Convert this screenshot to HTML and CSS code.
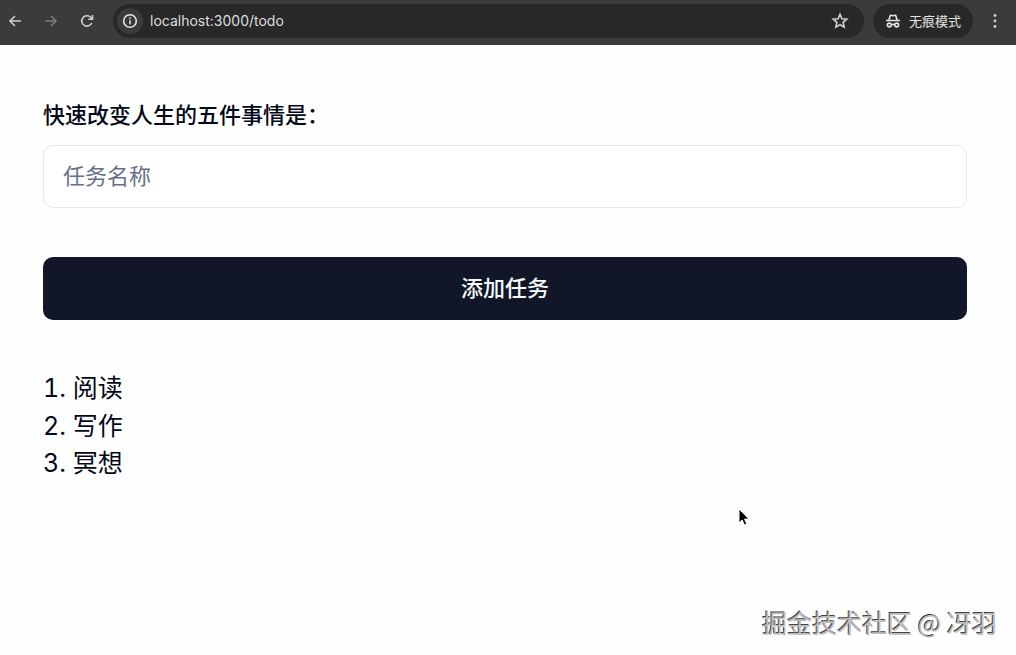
FILE: index.html
```html
<!DOCTYPE html>
<html lang="zh-CN">
<head>
<meta charset="utf-8">
<meta name="viewport" content="width=device-width, initial-scale=1">
<title>Todo</title>
<link rel="stylesheet" href="styles.css">
</head>
<body>
<header class="toolbar">
  <nav class="nav">
    <button class="icon-button" type="button" aria-label="后退">
      <svg width="16" height="16" viewBox="0 0 16 16"><path d="M14 8H3M8 3L3 8l5 5"/></svg>
    </button>
    <button class="icon-button icon-button-dim" type="button" aria-label="前进">
      <svg width="16" height="16" viewBox="0 0 16 16"><path d="M2 8h11M8 3l5 5-5 5"/></svg>
    </button>
    <button class="icon-button" type="button" aria-label="刷新">
      <svg width="16" height="16" viewBox="0 0 16 16"><path d="M12.700 10a5.200 5.200 0 1 1-1-5.700L13.300 6M13.500 2v4.200H9.300"/></svg>
    </button>
  </nav>
  <div class="address">
    <button class="site-info" type="button" aria-label="网站信息">
      <svg width="16" height="16" viewBox="0 0 16 16"><circle cx="8" cy="8" r="6.300"/><path d="M8 7.300v4M8 4.500v1.600"/></svg>
    </button>
    <input class="url" type="text" aria-label="地址" value="localhost:3000/todo">
    <button class="icon-button" type="button" aria-label="收藏">
      <svg width="18" height="18" viewBox="0 0 18 18"><path d="M9 2.300l1.900 4.500 4.900.4-3.700 3.200 1.100 4.800L9 12.700l-4.200 2.500 1.100-4.800-3.700-3.200 4.900-.4z"/></svg>
    </button>
  </div>
  <button class="incognito" type="button">
    <svg width="16" height="16" viewBox="0 0 16 16"><path d="M1 7.500h14M3.900 7l1.300-4.300q.2-.6.800-.4l2 .4 2-.4q.6-.2.800.4L12.100 7M6.300 11.800q1.700-.9 3.400 0"/><circle cx="4.300" cy="12" r="1.900"/><circle cx="11.700" cy="12" r="1.900"/></svg>
    <span>无痕模式</span>
  </button>
  <button class="icon-button menu" type="button" aria-label="菜单">
    <svg width="16" height="16" viewBox="0 0 16 16"><circle class="dot" cx="8" cy="2.500" r="1.400"/><circle class="dot" cx="8" cy="8" r="1.400"/><circle class="dot" cx="8" cy="13.500" r="1.400"/></svg>
  </button>
</header>
<main class="page">
  <form class="todo-form">
    <label class="label" for="task">快速改变人生的五件事情是：</label>
    <input class="field" id="task" type="text" placeholder="任务名称">
    <button class="submit" type="button">添加任务</button>
  </form>
  <ol class="tasks">
    <li>阅读</li>
    <li>写作</li>
    <li>冥想</li>
  </ol>
</main>
<svg class="cursor" width="14" height="20" viewBox="0 0 14 20"><path d="M2 2v14l3.200-3 2.200 5 2.400-1-2.200-4.900H12z"/></svg>
<div class="watermark">掘金技术社区 @ 冴羽</div>
</body>
</html>
```
FILE: styles.css
```css
* {
  box-sizing: border-box;
}

body {
  margin: 0;
  min-height: 100vh;
  background: #fefefe;
  color: #020817;
  font-family: Inter, "Noto Sans CJK SC", sans-serif;
}

button,
input {
  font: inherit;
  border: 0;
  padding: 0;
  margin: 0;
}

svg {
  display: block;
  fill: none;
  stroke: currentColor;
  stroke-width: 1.6;
}

.toolbar {
  display: flex;
  align-items: center;
  height: 45px;
  padding: 0 13px 4px 7px;
  background: #3b3b3b;
  color: #d0d0d0;
}

.nav {
  display: flex;
  gap: 20px;
  margin-right: 18px;
}

.icon-button {
  background: none;
  color: inherit;
}

.icon-button-dim {
  color: #7c7c7c;
}

.address {
  display: flex;
  flex: 1;
  align-items: center;
  height: 34px;
  padding: 0 15px 0 4px;
  border-radius: 17px;
  background: #282828;
}

.site-info {
  padding: 5px;
  border-radius: 50%;
  background: #3b3b3b;
  color: #e3e3e3;
}

.url {
  flex: 1;
  min-width: 0;
  margin-left: 7px;
  background: none;
  color: #dedede;
  font-size: 14px;
  outline: 0;
}

.incognito {
  display: flex;
  align-items: center;
  gap: 8px;
  height: 34px;
  margin: 0 14px 0 9px;
  padding: 0 12px;
  border-radius: 17px;
  background: #282828;
  color: #e3e3e3;
  font-size: 13px;
}

.dot {
  fill: currentColor;
  stroke: none;
}

.page {
  padding: 54px 49px 40px 43px;
}

.todo-form {
  display: flex;
  flex-direction: column;
}

.label {
  font-size: 22px;
  font-weight: 500;
  line-height: 32px;
}

.field {
  height: 63px;
  margin-top: 14px;
  padding: 0 19px 2px;
  border: 1px solid #e5e7eb;
  border-radius: 10px;
  background: #fff;
  color: inherit;
  font-size: 22px;
}

.field::placeholder {
  color: #64708a;
  opacity: 1;
}

.submit {
  height: 63px;
  margin-top: 49px;
  padding-bottom: 5px;
  border-radius: 10px;
  background: #111729;
  color: #f8fafc;
  font-size: 22px;
  font-weight: 500;
}

.tasks {
  margin: 50px 0 0;
  padding: 0;
  list-style-position: inside;
  font-size: 25px;
  line-height: 1.5;
}

.cursor {
  position: absolute;
  left: 737px;
  top: 507px;
  fill: #000;
  stroke: #fff;
  stroke-width: 1;
}

.watermark {
  position: absolute;
  right: 19px;
  bottom: 14px;
  color: #bdbdbd;
  font-family: "Noto Sans CJK SC", sans-serif;
  font-size: 25px;
  line-height: 38px;
  text-shadow: -1px -1px 0 #444;
}
```
